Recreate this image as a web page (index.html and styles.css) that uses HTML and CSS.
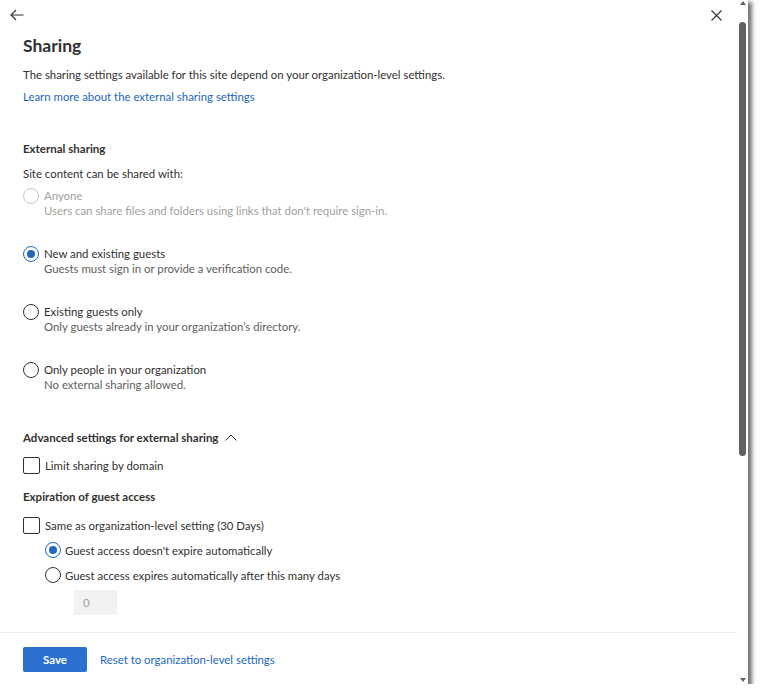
FILE: index.html
```html
<!DOCTYPE html>
<html>
<head>
<meta charset="utf-8">
<link rel="stylesheet" href="styles.css">
</head>
<body>
<div class="panel">
  <div class="main">
    <div class="content">
      <div class="topbar">
        <svg class="icon" width="14" height="12" viewBox="0 0 14 12"><path d="M6 1 L1 6 L6 11 M1 6 H13.5" fill="none" stroke="#323130" stroke-width="1.1"/></svg>
        <svg class="icon" width="11" height="11" viewBox="0 0 11 11"><path d="M0.5 0.5 L10.5 10.5 M10.5 0.5 L0.5 10.5" fill="none" stroke="#323130" stroke-width="1.1"/></svg>
      </div>
      <h1 class="title">Sharing</h1>
      <p class="desc">The sharing settings available for this site depend on your organization-level settings.</p>
      <a class="link">Learn more about the external sharing settings</a>
      <h2 class="section ext">External sharing</h2>
      <p class="desc site">Site content can be shared with:</p>
      <div class="options">
        <div class="option disabled">
          <span class="radio"></span>
          <div class="otext">
            <div class="olabel">Anyone</div>
            <div class="odesc">Users can share files and folders using links that don't require sign-in.</div>
          </div>
        </div>
        <div class="option">
          <span class="radio checked"></span>
          <div class="otext">
            <div class="olabel">New and existing guests</div>
            <div class="odesc">Guests must sign in or provide a verification code.</div>
          </div>
        </div>
        <div class="option">
          <span class="radio"></span>
          <div class="otext">
            <div class="olabel">Existing guests only</div>
            <div class="odesc">Only guests already in your organization’s directory.</div>
          </div>
        </div>
        <div class="option">
          <span class="radio"></span>
          <div class="otext">
            <div class="olabel">Only people in your organization</div>
            <div class="odesc">No external sharing allowed.</div>
          </div>
        </div>
      </div>
      <h2 class="section adv">Advanced settings for external sharing
        <svg class="chev" width="12" height="7" viewBox="0 0 12 7"><path d="M0.5 6.5 L6 1 L11.5 6.5" fill="none" stroke="#323130" stroke-width="1"/></svg>
      </h2>
      <div class="check limit"><span class="box"></span><span>Limit sharing by domain</span></div>
      <h2 class="section exp">Expiration of guest access</h2>
      <div class="check same"><span class="box"></span><span>Same as organization-level setting (30 Days)</span></div>
      <div class="sub">
        <div class="subrow"><span class="radio checked"></span><span>Guest access doesn't expire automatically</span></div>
        <div class="subrow"><span class="radio"></span><span>Guest access expires automatically after this many days</span></div>
        <div class="daysbox">0</div>
      </div>
    </div>
    <div class="footer">
      <button class="save">Save</button>
      <a class="link reset">Reset to organization-level settings</a>
    </div>
  </div>
  <div class="scrollbar">
    <span class="arrow up"></span>
    <span class="thumb"></span>
    <span class="arrow down"></span>
  </div>
</div>
</body>
</html>
```
FILE: styles.css
```css
* { box-sizing: border-box; }
html, body { margin: 0; padding: 0; background: #ffffff; }
body { font-family: Lato, "Open Sans", sans-serif; color: #323130; font-size: 11.4px; }

.panel {
  width: 748px;
  height: 684px;
  background: #fff;
  display: flex;
  box-shadow: 3px 3px 4px 1px rgba(0,0,0,0.55);
}
.main { flex: 1; display: flex; flex-direction: column; }
.content { height: 633px; padding-left: 23px; border-bottom: 1px solid #edebe9; }

.topbar {
  height: 30px;
  margin-left: -13px;
  padding-right: 15px;
  display: flex;
  align-items: center;
  justify-content: space-between;
}
.icon { display: block; }

.title { margin: 5px 0 0; font-size: 17.5px; line-height: 22px; font-weight: 700; }
.desc { margin: 9px 0 0; line-height: 18px; }
.link { display: block; margin-top: 4px; line-height: 18px; color: #2266c2; text-decoration: none; }

.section { margin: 0; font-size: 11.5px; font-weight: 700; line-height: 18px; }
.ext { margin-top: 34px; }
.site { margin-top: 7px; }

.options { margin-top: 5px; display: flex; flex-direction: column; gap: 28px; }
.option { display: flex; gap: 5px; align-items: flex-start; }
.otext { line-height: 15px; }
.odesc { color: #605e5c; }
.disabled .olabel, .disabled .odesc { color: #a19f9d; }
.disabled .radio { border-color: #c8c6c4; }

.radio {
  width: 16px; height: 16px; flex: none;
  border: 1px solid #323130; border-radius: 50%;
  display: inline-flex; align-items: center; justify-content: center;
}
.radio.checked { border-color: #2266c2; }
.radio.checked::after {
  content: ""; width: 8px; height: 8px; border-radius: 50%; background: #2266c2;
}

.adv { margin-top: 37px; display: flex; align-items: center; gap: 7px; }
.chev { display: block; margin-top: -2px; }

.check { display: flex; align-items: center; gap: 5px; height: 20px; }
.box { width: 17px; height: 17px; border: 1px solid #323130; border-radius: 2px; flex: none; }
.limit { margin-top: 8px; }
.exp { margin-top: 13px; }
.same { margin-top: 9px; }

.sub { padding-left: 22px; display: flex; flex-direction: column; gap: 5px; margin-top: 5px; }
.subrow { display: flex; align-items: center; gap: 4px; height: 20px; }
.daysbox {
  margin-left: 29px; width: 43px; height: 25px; background: #f3f2f1;
  color: #a19f9d; line-height: 25px; padding-left: 9px;
}

.footer { flex: 1; display: flex; align-items: flex-start; padding: 14px 0 0 23px; gap: 13px; }
.save {
  width: 64px; height: 25px; border: none; border-radius: 2px;
  background: #2b6fcf; color: #fff; font-family: inherit; font-size: 11.5px; font-weight: 700;
}
.reset { margin-top: 4px; }

.scrollbar { width: 11px; display: flex; flex-direction: column; align-items: center; padding-top: 1px; }
.arrow { width: 0; height: 0; border-left: 3.5px solid transparent; border-right: 3.5px solid transparent; }
.arrow.up { border-bottom: 4px solid #606060; }
.arrow.down { border-top: 4px solid #606060; margin-top: auto; margin-bottom: 2px; }
.thumb { width: 7px; height: 434px; margin-top: 17px; background: #606060; border-radius: 4px; }
```
